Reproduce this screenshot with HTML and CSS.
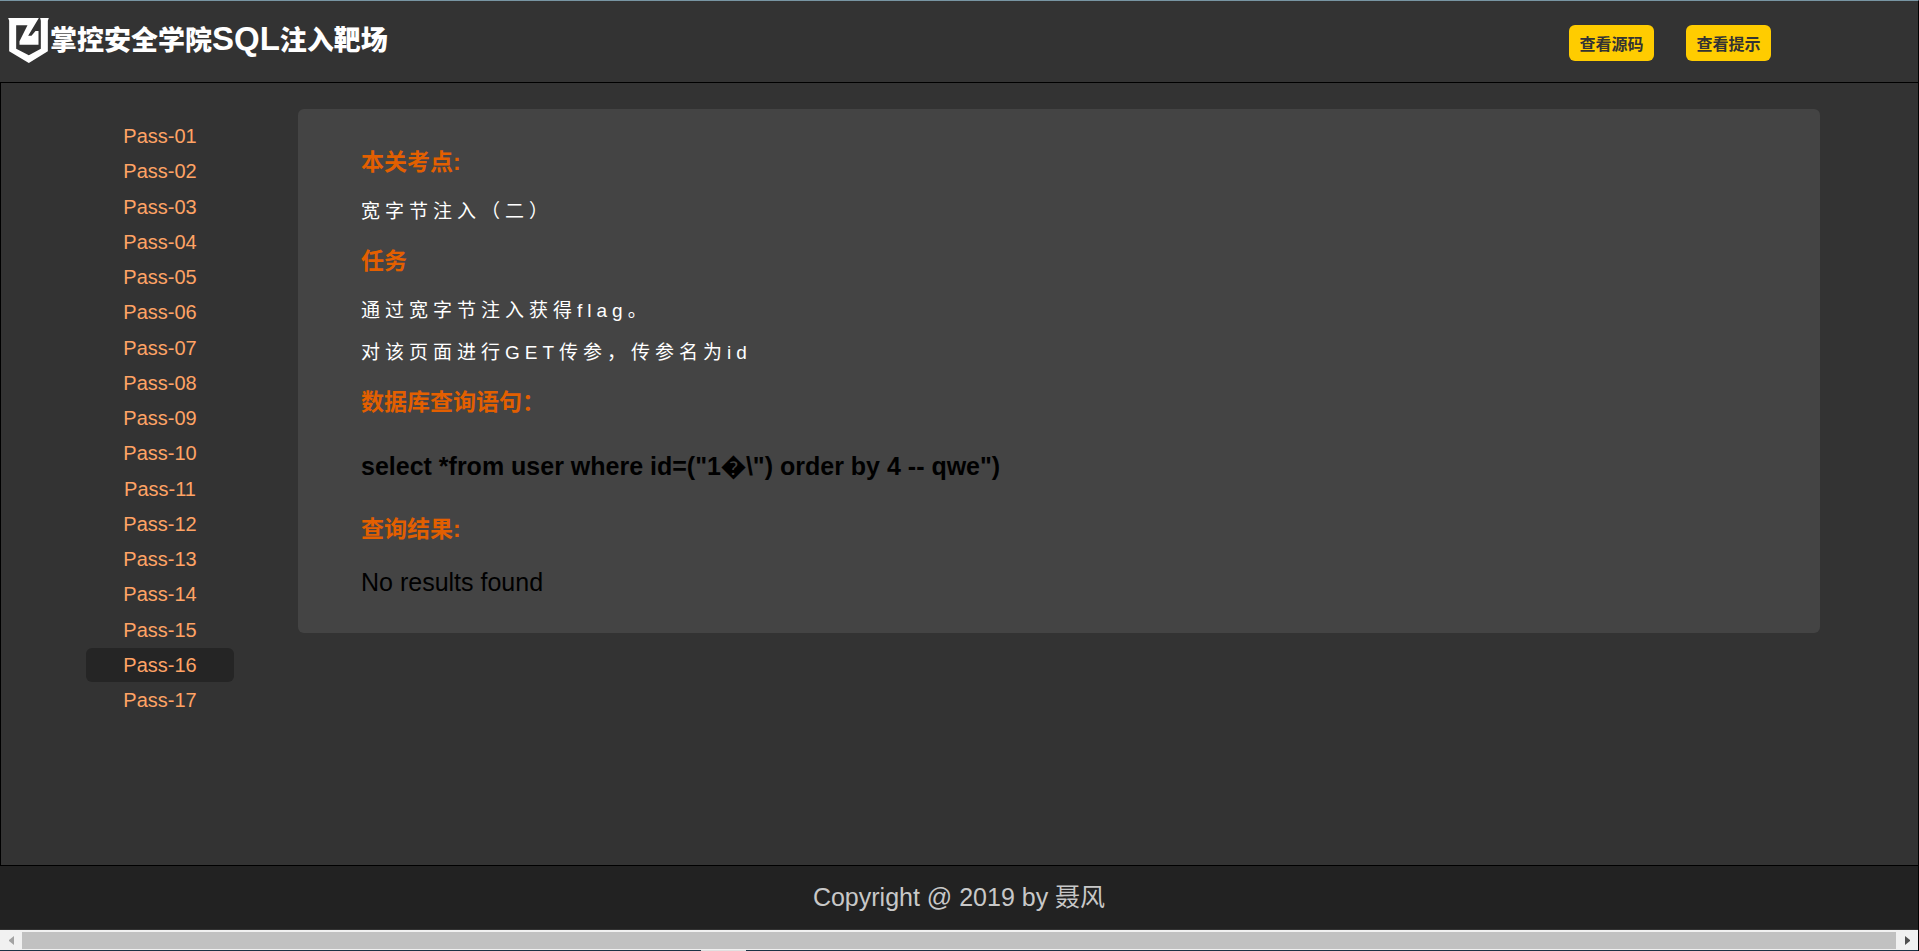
FILE: index.html
```
<!DOCTYPE html>
<html lang="zh-CN">
<head>
    <meta charset="UTF-8">
    <meta name="viewport" content="width=device-width, initial-scale=1.0">
    <title>掌控安全学院SQL注入靶场</title>
    <link rel="stylesheet" href="styles.css">
</head>
<body>

    <header class="head">
        <a class="logo" href="#">
            <svg class="logo-icon" viewBox="0 0 122 135" aria-hidden="true">
                <path fill="#fff" fill-rule="evenodd" d="M0 0H92L60 53H70L82 39H91V80H34V70L58 22H24V92L62 112L98 92V8L96 0H122L119 8V100L62 135L3 100V8Z"/>
            </svg>
            <span class="logo-text">掌控安全学院<span class="latin">SQL</span>注入靶场</span>
        </a>
        <div class="tools">
            <button type="button">查看源码</button>
            <button type="button">查看提示</button>
        </div>
    </header>

    <main class="main">
        <nav>
            <ul class="menu">
                <li><a href="#">Pass-01</a></li>
                <li><a href="#">Pass-02</a></li>
                <li><a href="#">Pass-03</a></li>
                <li><a href="#">Pass-04</a></li>
                <li><a href="#">Pass-05</a></li>
                <li><a href="#">Pass-06</a></li>
                <li><a href="#">Pass-07</a></li>
                <li><a href="#">Pass-08</a></li>
                <li><a href="#">Pass-09</a></li>
                <li><a href="#">Pass-10</a></li>
                <li><a href="#">Pass-11</a></li>
                <li><a href="#">Pass-12</a></li>
                <li><a href="#">Pass-13</a></li>
                <li><a href="#">Pass-14</a></li>
                <li><a href="#">Pass-15</a></li>
                <li><a class="active" href="#">Pass-16</a></li>
                <li><a href="#">Pass-17</a></li>
            </ul>
        </nav>

        <section class="panel">
            <h3>本关考点:</h3>
            <p>宽字节注入（二）</p>
            <h3>任务</h3>
            <p>通过宽字节注入获得flag。</p>
            <p>对该页面进行GET传参，传参名为id</p>
            <h3>数据库查询语句：</h3>
            <div class="query">select *from user where id=("1&#xFFFD;\") order by 4 -- qwe")</div>
            <h3>查询结果:</h3>
            <div class="result">No results found</div>
        </section>
    </main>

    <footer class="footer">Copyright @ 2019 by 聂风</footer>

    <div class="scrollbar">
        <button type="button" aria-label="向左滚动">
            <svg width="5" height="9" viewBox="0 0 5 9"><path fill="#a3a3a3" d="M5 0V9L0 5V4Z"/></svg>
        </button>
        <div class="thumb"></div>
        <button type="button" aria-label="向右滚动">
            <svg width="5" height="9" viewBox="0 0 5 9"><path fill="#505050" d="M0 0V9L5 5V4Z"/></svg>
        </button>
    </div>
    <div class="edge"></div>

</body>
</html>
```
FILE: styles.css
```
*{
    box-sizing: border-box;
}
body{
    display: flex;
    flex-direction: column;
    min-height: 100vh;
    margin: 0;
    border-top: 1px solid #7895a3;
    border-right: 1px solid #000;
    background: #333;
    font-family: "Liberation Sans", "Noto Sans CJK SC", sans-serif;
}
button{
    border: 0;
    padding: 0;
    font-family: inherit;
    cursor: pointer;
}

/* cabecera */
.head{
    display: flex;
    justify-content: space-between;
    align-items: flex-start;
    height: 81px;
    padding: 17px 147px 0 8px;
}
.logo{
    display: flex;
    align-items: flex-start;
    gap: 1px;
    color: #fff;
    text-decoration: none;
}
.logo-icon{
    width: 41px;
    height: 45px;
}
.logo-text{
    font-size: 27px;
    font-weight: 900;
    line-height: 42px;
    white-space: nowrap;
}
.logo-text .latin{
    font-size: 33px;
}
.tools{
    display: flex;
    gap: 32px;
    padding-top: 7px;
}
.tools button{
    min-width: 85px;
    height: 36px;
    border-radius: 6px;
    background: #fc0;
    color: #333;
    font-size: 16px;
    font-weight: bold;
}

/* contenido */
.main{
    display: flex;
    flex: 1;
    align-items: flex-start;
    gap: 64px;
    padding: 26px 98px 40px 85px;
    border: 1px solid #000;
    border-right: 0;
}
.menu{
    display: flex;
    flex-direction: column;
    justify-content: space-between;
    width: 148px;
    min-height: 598px;
    margin: 10px 0 0;
    padding: 0;
    list-style: none;
}
.menu a{
    display: block;
    border-radius: 6px;
    color: #ffa365;
    font-size: 20px;
    line-height: 34px;
    text-align: center;
    text-decoration: none;
}
.menu .active{
    background: #252525;
}
.panel{
    flex: 1;
    padding: 38px 63px 36px;
    border-radius: 6px;
    background: #444;
    color: #000;
}
.panel h3{
    margin: 22px 0 23px;
    color: #e35f00;
    font-size: 23px;
    line-height: 30px;
}
.panel h3:first-child{
    margin-top: 0;
}
.panel p{
    margin: 18px 0;
    color: #fff;
    font-size: 19px;
    line-height: 24px;
    letter-spacing: 5px;
}
.query{
    margin: 34px 0 33px;
    font-size: 25px;
    font-weight: bold;
    line-height: 30px;
}
.result{
    font-size: 25px;
    line-height: 30px;
}

.footer{
    height: 64px;
    border-bottom: 1px solid #333;
    background: #222;
    color: #c8c8c8;
    font-size: 25px;
    line-height: 63px;
    text-align: center;
}

.scrollbar{
    display: flex;
    height: 20px;
    background: #f1f1f1;
}
.scrollbar button{
    display: flex;
    align-items: center;
    justify-content: center;
    width: 22px;
    background: none;
}
.thumb{
    flex: 1;
    margin: 2px 0 1px;
    background: #c1c1c1;
}
.edge{
    height: 1px;
    background: linear-gradient(to right, #1b3245 701px, #e0e0e0 701px, #e0e0e0 746px, #1b3245 746px);
}
```
